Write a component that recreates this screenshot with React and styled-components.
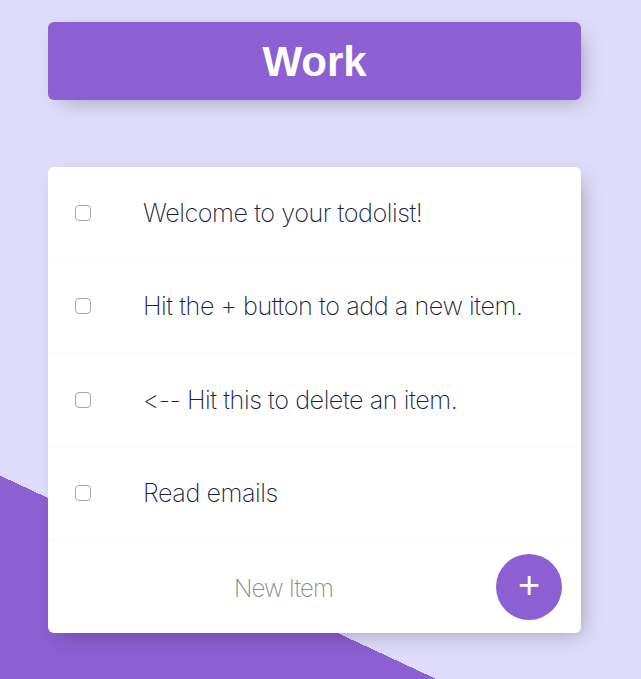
import React from 'react';
import styled, { createGlobalStyle } from 'styled-components';

const GlobalStyle = createGlobalStyle`
  html, body {
    margin: 0;
    padding: 0;
  }
  body {
    font-family: "Liberation Sans", Arial, sans-serif;
  }
`;

const Page = styled.div`
  height: 100vh;
  box-sizing: border-box;
  padding: 22px 12px 0 0;
  background-color: #dedcfa;
  background-image: linear-gradient(25deg, #8c5fd2 20.8%, #dedcfa 20.8%);
  overflow: hidden;
`;

const Box = styled.div`
  width: 533px;
  margin: 0 auto 67px;
  background: ${(p) => (p.$heading ? '#8c5fd2' : '#fff')};
  border-radius: 6px;
  box-shadow: 7px 7px 20px -7px rgba(0, 0, 0, 0.3);
  text-align: ${(p) => (p.$heading ? 'center' : 'left')};

  &:last-child {
    margin-bottom: 0;
  }
`;

const Title = styled.h1`
  margin: 0;
  height: 78px;
  padding-top: 2px;
  box-sizing: border-box;
  display: flex;
  align-items: center;
  justify-content: center;
  color: #fff;
  font-family: "Liberation Sans", Arial, sans-serif;
  font-weight: 700;
  font-size: 42px;
`;

const Item = styled.div`
  min-height: 93.3px;
  display: flex;
  align-items: center;
  border-bottom: 1px solid #fbfbfb;
  box-sizing: border-box;

  &:last-child {
    border-bottom: 0;
  }
`;

const Check = styled.input`
  appearance: none;
  width: 16px;
  height: 16px;
  margin: 0 26px 0 27px;
  border: 1px solid #a7a7a7;
  border-radius: 4px;
  background: #fff;
  flex-shrink: 0;
`;

const Text = styled.p`
  margin: 0;
  padding: 0 26px;
  font-family: Inter, "Liberation Sans", sans-serif;
  font-size: 25.2px;
  font-weight: 250;
  letter-spacing: -0.45px;
  color: #14213f;
`;

const Form = styled.form`
  display: flex;
  align-items: center;
  margin-left: 27px;
  height: 93px;
`;

const NewInput = styled.input`
  width: 417px;
  height: 80px;
  border: none;
  background: transparent;
  text-align: center;
  font-family: Inter, "Liberation Sans", sans-serif;
  font-size: 24px;
  font-weight: 250;
  letter-spacing: -0.8px;
  padding: 4px 0 0;
  outline: none;

  &::placeholder {
    color: #8a8a8a;
  }
`;

const AddButton = styled.button`
  width: 66px;
  height: 66px;
  margin-left: 4px;
  border-radius: 50%;
  border: 0;
  background: #8c5fd2;
  color: #fff;
  font-family: "Liberation Sans", Arial, sans-serif;
  font-size: 38px;
  line-height: 1;
  padding: 0 0 4px;
  display: flex;
  align-items: center;
  justify-content: center;
`;

const items = [
  'Welcome to your todolist!',
  'Hit the + button to add a new item.',
  '<-- Hit this to delete an item.',
  'Read emails',
];

export default function App() {
  return (
    <Page>
      <GlobalStyle />
      <Box $heading>
        <Title>Work</Title>
      </Box>
      <Box>
        {items.map((text) => (
          <Item key={text}>
            <Check type="checkbox" />
            <Text>{text}</Text>
          </Item>
        ))}
        <Item>
          <Form onSubmit={(e) => e.preventDefault()}>
            <NewInput type="text" placeholder="New Item" />
            <AddButton type="submit">+</AddButton>
          </Form>
        </Item>
      </Box>
    </Page>
  );
}
